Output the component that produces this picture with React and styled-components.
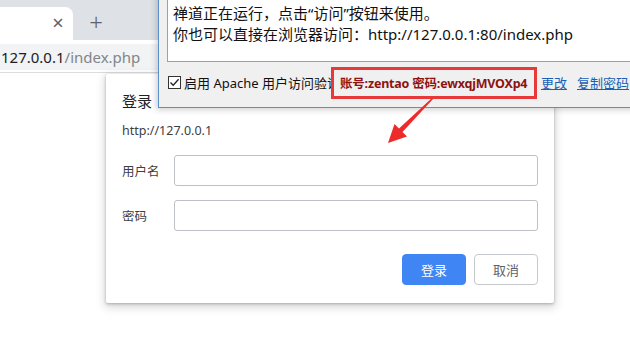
import React from 'react'
import styled, { createGlobalStyle } from 'styled-components'

const GlobalStyle = createGlobalStyle`
    html, body {
        margin: 0;
        padding: 0;
        background: #fff;
    }
    * {
        box-sizing: border-box;
    }
`

const UI_FONT = `"Noto Sans", "Noto Sans CJK SC", sans-serif`

export default function App() {
    return (
        <>
            <GlobalStyle />
            <Screen>
                <Browser>
                    <TabStrip>
                        <Tab>
                            <TabClose>×</TabClose>
                        </Tab>
                        <NewTab>+</NewTab>
                    </TabStrip>
                    <Toolbar>
                        <Omnibox>
                            <Host>127.0.0.1</Host>
                            <UrlPath>/index.php</UrlPath>
                        </Omnibox>
                    </Toolbar>
                    <Page>
                        <AuthDialog>
                            <DialogTitle>登录</DialogTitle>
                            <Origin>http://127.0.0.1</Origin>
                            <Field>
                                <FieldLabel>用户名</FieldLabel>
                                <Input />
                            </Field>
                            <Field>
                                <FieldLabel>密码</FieldLabel>
                                <Input type="password" />
                            </Field>
                            <Actions>
                                <Button primary>登录</Button>
                                <Button>取消</Button>
                            </Actions>
                        </AuthDialog>
                    </Page>
                </Browser>

                <AppWindow>
                    <Log>
                        <LogLine>禅道正在运行，点击“访问”按钮来使用。</LogLine>
                        <LogLine>你也可以直接在浏览器访问：http://127.0.0.1:80/index.php</LogLine>
                    </Log>
                    <StatusRow>
                        <CheckLabel>
                            <CheckBox>
                                <svg width="11" height="11" viewBox="0 0 11 11">
                                    <path d="M1.5 5.5 L4.2 8.3 L9.6 2.2" fill="none" stroke="#222" strokeWidth="1.3" />
                                </svg>
                            </CheckBox>
                            启用 Apache 用户访问验证
                        </CheckLabel>
                        <Credentials>账号:zentao 密码:ewxqjMVOXp4</Credentials>
                        <LinkText>更改</LinkText>
                        <LinkText>复制密码</LinkText>
                    </StatusRow>
                </AppWindow>

                <Arrow width="60" height="60" viewBox="0 0 60 60">
                    <polygon
                        points="8,51 14.5,32 19,36.5 52.5,5.5 53.5,6.5 22.5,40 27,44.5"
                        fill="#ee2b2b"
                    />
                </Arrow>
            </Screen>
        </>
    )
}

const Screen = styled.div`
    position: relative;
    width: 630px;
    height: 340px;
    overflow: hidden;
    font-family: ${UI_FONT};
    background: #fff;
`

const Browser = styled.div`
    display: flex;
    flex-direction: column;
    height: 100%;
`

const TabStrip = styled.div`
    display: flex;
    align-items: flex-end;
    height: 40px;
    background: #dee1e6;
`

const Tab = styled.div`
    display: flex;
    align-items: center;
    justify-content: flex-end;
    width: 73px;
    height: 33px;
    padding-right: 7px;
    background: #fff;
    border-radius: 0 8px 0 0;
`

const TabClose = styled.span`
    width: 16px;
    text-align: center;
    font-size: 20px;
    line-height: 1;
    color: #5f6368;
    margin-bottom: 2px;
`

const NewTab = styled.span`
    width: 28px;
    margin-left: 9px;
    margin-bottom: 6px;
    text-align: center;
    font-size: 24px;
    font-weight: 300;
    line-height: 1;
    color: #5f6368;
`

const Toolbar = styled.div`
    height: 33px;
    padding: 4px 0 3px;
    background: #fff;
    border-bottom: 1px solid #dadce0;
`

const Omnibox = styled.div`
    display: flex;
    align-items: center;
    height: 26px;
    padding-left: 1px;
    background: #f1f3f4;
    font-size: 15px;
`

const Host = styled.span`
    color: #202124;
`

const UrlPath = styled.span`
    color: #80868b;
`

const Page = styled.div`
    position: relative;
    flex: 1;
    background: #fff;
`

const AuthDialog = styled.div`
    position: absolute;
    left: 106px;
    top: 1px;
    width: 448px;
    padding: 17px 16px 18px 16px;
    background: #fff;
    border-radius: 2px;
    box-shadow: 0 1px 3px rgba(60, 64, 67, 0.35), 0 3px 8px 2px rgba(60, 64, 67, 0.18);
`

const DialogTitle = styled.div`
    font-size: 15px;
    line-height: 20px;
    color: #202124;
`

const Origin = styled.div`
    margin-top: 10px;
    font-size: 12.5px;
    line-height: 20px;
    color: #3c4043;
`

const Field = styled.div`
    display: flex;
    align-items: center;
    margin-top: 14px;

    &:first-of-type {
        margin-top: 17px;
    }
`

const FieldLabel = styled.span`
    width: 52px;
    font-size: 12.5px;
    color: #3c4043;
`

const Input = styled.input`
    width: 364px;
    height: 31px;
    border: 1px solid #bdc1c6;
    border-radius: 3px;
    outline: none;
    background: #fff;
`

const Actions = styled.div`
    display: flex;
    justify-content: flex-end;
    gap: 8px;
    margin-top: 23px;
`

const Button = styled.button`
    width: 64px;
    height: 31px;
    border-radius: 4px;
    font-family: ${UI_FONT};
    font-size: 13px;
    border: 1px solid ${p => (p.primary ? '#3f86f4' : '#c6c9cd')};
    background: ${p => (p.primary ? '#3f86f4' : '#fff')};
    color: ${p => (p.primary ? '#fff' : '#5f6368')};
`

const AppWindow = styled.div`
    position: absolute;
    left: 158px;
    top: -20px;
    width: 520px;
    padding-left: 8px;
    background: #f0f0f0;
    border: 1px solid #5b8fcc;
    box-shadow: -2px 2px 6px rgba(0, 0, 0, 0.18);
`

const Log = styled.div`
    height: 81px;
    padding: 21px 0 0 5px;
    background: #fff;
    border: 1px solid #a0a0a0;
    border-right: none;
`

const LogLine = styled.div`
    font-size: 15px;
    line-height: 21px;
    color: #111;
    white-space: nowrap;
`

const StatusRow = styled.div`
    display: flex;
    align-items: center;
    height: 45px;
    padding: 0 0 4px 1px;
    font-size: 13px;
    color: #111;
    white-space: nowrap;
`

const CheckLabel = styled.label`
    display: flex;
    align-items: center;
    gap: 3px;
    width: 163px;
    overflow: hidden;
`

const CheckBox = styled.span`
    display: flex;
    align-items: center;
    justify-content: center;
    width: 13px;
    height: 13px;
    flex-shrink: 0;
    border: 1px solid #333;
    background: #fff;
`

const Credentials = styled.span`
    display: flex;
    align-items: center;
    width: 206px;
    height: 32px;
    padding-left: 6px;
    border: 3px solid #e8393a;
    font-weight: bold;
    font-size: 12.5px;
    letter-spacing: -0.2px;
    color: #8e1212;
`

const LinkText = styled.span`
    margin-left: 4px;
    margin-right: 6px;
    font-size: 13px;
    color: #1a5fb4;
    text-decoration: underline;
`

const Arrow = styled.svg`
    position: absolute;
    left: 380px;
    top: 92px;
`
